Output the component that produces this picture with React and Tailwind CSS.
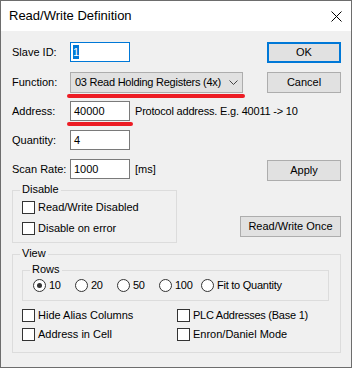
import React from "react";

const Box = ({ children, className = "" }) => (
  <div className={`h-[20px] w-[60px] border border-[#7a7a7a] bg-white flex items-center pl-[3px] ${className}`}>
    {children}
  </div>
);

const Button = ({ children, className = "" }) => (
  <div className={`h-[21px] border border-[#adadad] bg-[#e1e1e1] flex items-center justify-center ${className}`}>
    {children}
  </div>
);

const Check = ({ label, tight }) => (
  <div className="flex items-center h-[13px]">
    <div className="w-[13px] h-[13px] border border-[#333] bg-white" />
    <span className={`ml-[3px] leading-[13px] ${tight ? "tracking-[-0.25px]" : ""}`}>{label}</span>
  </div>
);

const Radio = ({ label, checked, className = "" }) => (
  <div className={`flex items-center h-[13px] ${className}`}>
    <div className="w-[13px] h-[13px] rounded-full border border-[#333] bg-white flex items-center justify-center">
      {checked && <div className="w-[5px] h-[5px] rounded-full bg-[#333]" />}
    </div>
    <span className="ml-[3px] leading-[13px] tracking-[-0.25px]">{label}</span>
  </div>
);

const Group = ({ title, className = "", children }) => (
  <div className={`relative border border-[#dcdcdc] ${className}`}>
    <span className="absolute -top-[8px] left-[7px] px-[2px] bg-[#f0f0f0] leading-[13px]">{title}</span>
    {children}
  </div>
);

export default function App() {
  return (
    <div className="w-[352px] h-[368px] border border-[#6d6d6d] bg-[#f0f0f0] flex flex-col font-['Liberation_Sans',Arial,sans-serif] text-[11px] text-black">
      {/* title bar */}
      <div className="h-[30px] bg-white flex items-center justify-between pl-[8px] pr-[9px]">
        <span className="text-[13px] leading-[16px]">Read/Write Definition</span>
        <svg width="11" height="11" viewBox="0 0 11 11">
          <path d="M0.5 0.5 L10.5 10.5 M10.5 0.5 L0.5 10.5" stroke="#000" strokeWidth="1" />
        </svg>
      </div>

      <div className="flex-1 pl-[11px] pr-[10px] pt-[11px]">
        {/* Slave ID */}
        <div className="flex items-start h-[21px]">
          <span className="w-[58px] leading-[20px]">Slave ID:</span>
          <div className="h-[20px] w-[60px] border border-[#0078d7] bg-white flex items-center pl-[2px]">
            <span className="bg-[#0078d7] text-white leading-[14px]">1</span>
          </div>
          <div className="ml-auto w-[74px] h-[21px] border-2 border-[#0078d7] bg-[#e1e1e1] flex items-center justify-center">
            OK
          </div>
        </div>

        {/* Function */}
        <div className="flex items-start h-[21px] mt-[9px]">
          <span className="w-[58px] leading-[21px]">Function:</span>
          <div className="relative w-[173px] h-[21px] border border-[#adadad] bg-[#e1e1e1] flex items-center pl-[4px] pr-[4px]">
            <span className="tracking-[-0.25px]">03 Read Holding Registers (4x)</span>
            <svg className="ml-auto" width="9" height="5" viewBox="0 0 9 5">
              <path d="M0.5 0.5 L4.5 4.5 L8.5 0.5" stroke="#444" strokeWidth="1" fill="none" />
            </svg>
            <div className="absolute left-[-4px] top-[21px] w-[178px] h-[4px] rounded-full bg-[#ed1c24]" />
          </div>
          <Button className="ml-auto w-[74px]">Cancel</Button>
        </div>

        {/* Address */}
        <div className="flex items-center h-[20px] mt-[8px]">
          <span className="w-[58px]">Address:</span>
          <div className="relative">
            <Box>40000</Box>
            <div className="absolute left-[-3px] top-[21px] w-[66px] h-[4px] rounded-full bg-[#ed1c24]" />
          </div>
          <span className="ml-[5px] tracking-[-0.2px]">Protocol address. E.g. 40011 -&gt; 10</span>
        </div>

        {/* Quantity */}
        <div className="flex items-center h-[20px] mt-[9px]">
          <span className="w-[58px]">Quantity:</span>
          <Box>4</Box>
        </div>

        {/* Scan rate */}
        <div className="flex items-start h-[22px] mt-[9px]">
          <span className="w-[58px] leading-[20px]">Scan Rate:</span>
          <Box>1000</Box>
          <span className="ml-[5px] leading-[20px]">[ms]</span>
          <Button className="ml-auto mt-[1px] w-[74px]">Apply</Button>
        </div>

        {/* Disable */}
        <div className="flex items-start mt-[9px]">
          <Group title="Disable" className="w-[165px] h-[53px]">
            <div className="flex flex-col gap-[8px] pt-[10px] pl-[9px]">
              <Check label="Read/Write Disabled" />
              <Check label="Disable on error" />
            </div>
          </Group>
          <Button className="ml-auto mt-[26px] w-[101px]">Read/Write Once</Button>
        </div>

        {/* View */}
        <Group title="View" className="mt-[11px] w-[329px] h-[99px]">
          <div className="pt-[15px] pl-[9px]">
            <Group title="Rows" className="w-[307px] h-[31px]">
              <div className="flex pt-[8px] pl-[10px]">
                <Radio label="10" checked className="w-[42px]" />
                <Radio label="20" className="w-[42px]" />
                <Radio label="50" className="w-[42px]" />
                <Radio label="100" className="w-[42px]" />
                <Radio label="Fit to Quantity" />
              </div>
            </Group>
            <div className="grid grid-cols-[155px_1fr] gap-y-[6px] mt-[8px]">
              <Check label="Hide Alias Columns" />
              <Check label="PLC Addresses (Base 1)" tight />
              <Check label="Address in Cell" />
              <Check label="Enron/Daniel Mode" />
            </div>
          </div>
        </Group>
      </div>
    </div>
  );
}
